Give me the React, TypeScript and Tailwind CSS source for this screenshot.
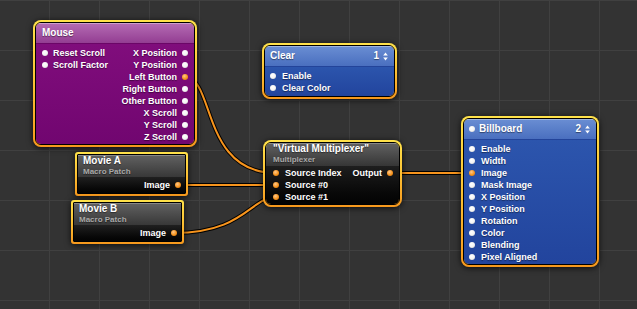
import React from "react";

type PortProps = { on?: boolean };

const Port: React.FC<PortProps> = ({ on }) => (
  <span
    className={
      on
        ? "w-[6px] h-[6px] rounded-full shrink-0 bg-[radial-gradient(circle_at_40%_35%,#ffc88a,#f7941d_55%,#c8690a)]"
        : "w-[6px] h-[6px] rounded-full shrink-0 bg-[radial-gradient(circle_at_40%_35%,#ffffff,#f4f4f4_55%,#b8b8b8)]"
    }
  />
);

const Arrows: React.FC = () => (
  <svg width="5" height="9" viewBox="0 0 5 9" className="ml-[4px]">
    <path d="M2.5 0.5 L4.8 3.6 L0.2 3.6 Z" fill="#ffffff" />
    <path d="M2.5 8.5 L4.8 5.4 L0.2 5.4 Z" fill="#ffffff" />
  </svg>
);

const InRow: React.FC<{ label: string; on?: boolean; pad?: string }> = ({ label, on, pad }) => (
  <div className={`h-[12px] flex items-center ${pad ?? "pl-[6px] gap-[5px]"}`}>
    <Port on={on} />
    <span>{label}</span>
  </div>
);

const OutRow: React.FC<{ label: string; on?: boolean; pad?: string }> = ({ label, on, pad }) => (
  <div className={`h-[12px] flex items-center justify-end ${pad ?? "pr-[6px] gap-[5px]"}`}>
    <span>{label}</span>
    <Port on={on} />
  </div>
);

// yellow/orange selection frame around every patch
const Frame: React.FC<{ className: string; round?: boolean; children: React.ReactNode }> = ({
  className,
  round = true,
  children,
}) => (
  <div
    className={`absolute p-[2px] bg-gradient-to-b from-[#ffe24a] via-[#fcc234] to-[#f7981c] shadow-[0_1px_6px_rgba(0,0,0,0.75)] ${
      round ? "rounded-[8px]" : "rounded-[3px]"
    } ${className}`}
  >
    <div
      className={`border border-black overflow-hidden text-white font-bold leading-none [text-shadow:0_1px_1px_rgba(0,0,0,0.45)] ${
        round ? "rounded-[6px]" : "rounded-[1px]"
      }`}
    >
      {children}
    </div>
  </div>
);

const mouseOutputs = [
  "X Position",
  "Y Position",
  "Left Button",
  "Right Button",
  "Other Button",
  "X Scroll",
  "Y Scroll",
  "Z Scroll",
];

const billboardInputs = [
  "Enable",
  "Width",
  "Image",
  "Mask Image",
  "X Position",
  "Y Position",
  "Rotation",
  "Color",
  "Blending",
  "Pixel Aligned",
];

const Wire: React.FC<{ d: string }> = ({ d }) => (
  <g fill="none" strokeLinecap="round">
    <path d={d} stroke="#000000" strokeWidth={4} />
    <path d={d} stroke="#f7941d" strokeWidth={2} />
  </g>
);

const MovieNode: React.FC<{ title: string; className: string }> = ({ title, className }) => (
  <Frame className={className} round={false}>
    <div className="bg-gradient-to-b from-[#626262] to-[#383838] pl-[5px] pb-[1px] shadow-[inset_0_1px_0_rgba(255,255,255,0.25)]">
      <div className="h-[12px] flex items-center text-[10px]">{title}</div>
      <div className="h-[9px] flex items-center text-[8px] text-[#a9a9a9]">Macro Patch</div>
    </div>
    <div className="bg-gradient-to-b from-[#202020] to-[#030303] pt-[2px] pb-[2px] text-[9px]">
      <OutRow label="Image" on pad="pr-[4px] gap-[5px]" />
    </div>
  </Frame>
);

export default function App() {
  return (
    <div
      className="relative w-[637px] h-[309px] overflow-hidden bg-[#333333] bg-[image:linear-gradient(to_right,#404040_1px,transparent_1px),linear-gradient(to_bottom,#404040_1px,transparent_1px)] bg-size-[50px_50px] bg-position-[49px_0px]"
      style={{ fontFamily: '"Liberation Sans", Arial, sans-serif' }}
    >
      <svg className="absolute inset-0" width="637" height="309">
        <Wire d="M185 77 C215 77 201 173 276 173" />
        <Wire d="M178 185 L276 185" />
        <Wire d="M174 233 C244 233 251 197 276 197" />
        <Wire d="M390 173 L472 173" />
      </svg>

      {/* Mouse */}
      <Frame className="left-[33px] top-[20px] w-[164px]">
        <div className="h-[21px] flex items-center px-[6px] text-[10px] bg-gradient-to-b from-[#b56cb4] to-[#933d92] border-b border-[#6b0667] shadow-[inset_0_1px_0_rgba(255,255,255,0.35)]">
          Mouse
        </div>
        <div className="flex justify-between pt-[3px] pb-[1px] text-[9px] bg-gradient-to-b from-[#800d7c] to-[#710670]">
          <div className="flex flex-col">
            <InRow label="Reset Scroll" />
            <InRow label="Scroll Factor" />
          </div>
          <div className="flex flex-col">
            {mouseOutputs.map((o) => (
              <OutRow key={o} label={o} on={o === "Left Button"} />
            ))}
          </div>
        </div>
      </Frame>

      {/* Clear */}
      <Frame className="left-[262px] top-[43px] w-[135px]">
        <div className="h-[21px] flex items-center justify-between pl-[5px] pr-[6px] text-[10px] bg-gradient-to-b from-[#6a8ed3] to-[#4a6fbf] border-b border-[#23449a] shadow-[inset_0_1px_0_rgba(255,255,255,0.35)]">
          <span>Clear</span>
          <span className="flex items-center">
            1<Arrows />
          </span>
        </div>
        <div className="pt-[3px] pb-[2px] text-[9px] bg-gradient-to-b from-[#2c55ad] to-[#22449d]">
          <InRow label="Enable" pad="pl-[5px] gap-[6px]" />
          <InRow label="Clear Color" pad="pl-[5px] gap-[6px]" />
        </div>
      </Frame>

      <MovieNode title="Movie A" className="left-[75px] top-[152px] w-[113px]" />
      <MovieNode title="Movie B" className="left-[71px] top-[200px] w-[113px]" />

      {/* Virtual Multiplexer */}
      <Frame className="left-[263px] top-[140px] w-[139px]">
        <div className="bg-gradient-to-b from-[#626262] to-[#363636] pl-[7px] pb-[2px] shadow-[inset_0_1px_0_rgba(255,255,255,0.25)]">
          <div className="h-[12px] flex items-center text-[10px]">"Virtual Multiplexer"</div>
          <div className="h-[9px] flex items-center text-[8px] text-[#a9a9a9]">Multiplexer</div>
        </div>
        <div className="flex justify-between pt-[1px] pb-[1px] text-[9px] bg-gradient-to-b from-[#1e1e1e] to-[#030303]">
          <div className="flex flex-col">
            <InRow label="Source Index" on pad="pl-[7px] gap-[6px]" />
            <InRow label="Source #0" on pad="pl-[7px] gap-[6px]" />
            <InRow label="Source #1" on pad="pl-[7px] gap-[6px]" />
          </div>
          <div className="flex flex-col">
            <OutRow label="Output" on pad="pr-[6px] gap-[5px]" />
          </div>
        </div>
      </Frame>

      {/* Billboard */}
      <Frame className="left-[461px] top-[116px] w-[138px]">
        <div className="h-[21px] flex items-center justify-between pl-[5px] pr-[6px] text-[10px] bg-gradient-to-b from-[#6a8ed3] to-[#4a6fbf] border-b border-[#23449a] shadow-[inset_0_1px_0_rgba(255,255,255,0.35)]">
          <span className="flex items-center gap-[4px]">
            <Port />
            Billboard
          </span>
          <span className="flex items-center">
            2<Arrows />
          </span>
        </div>
        <div className="pt-[3px] pb-[1px] text-[9px] bg-gradient-to-b from-[#2c55ad] to-[#22449d]">
          {billboardInputs.map((i) => (
            <InRow key={i} label={i} on={i === "Image"} pad="pl-[5px] gap-[6px]" />
          ))}
        </div>
      </Frame>
    </div>
  );
}
